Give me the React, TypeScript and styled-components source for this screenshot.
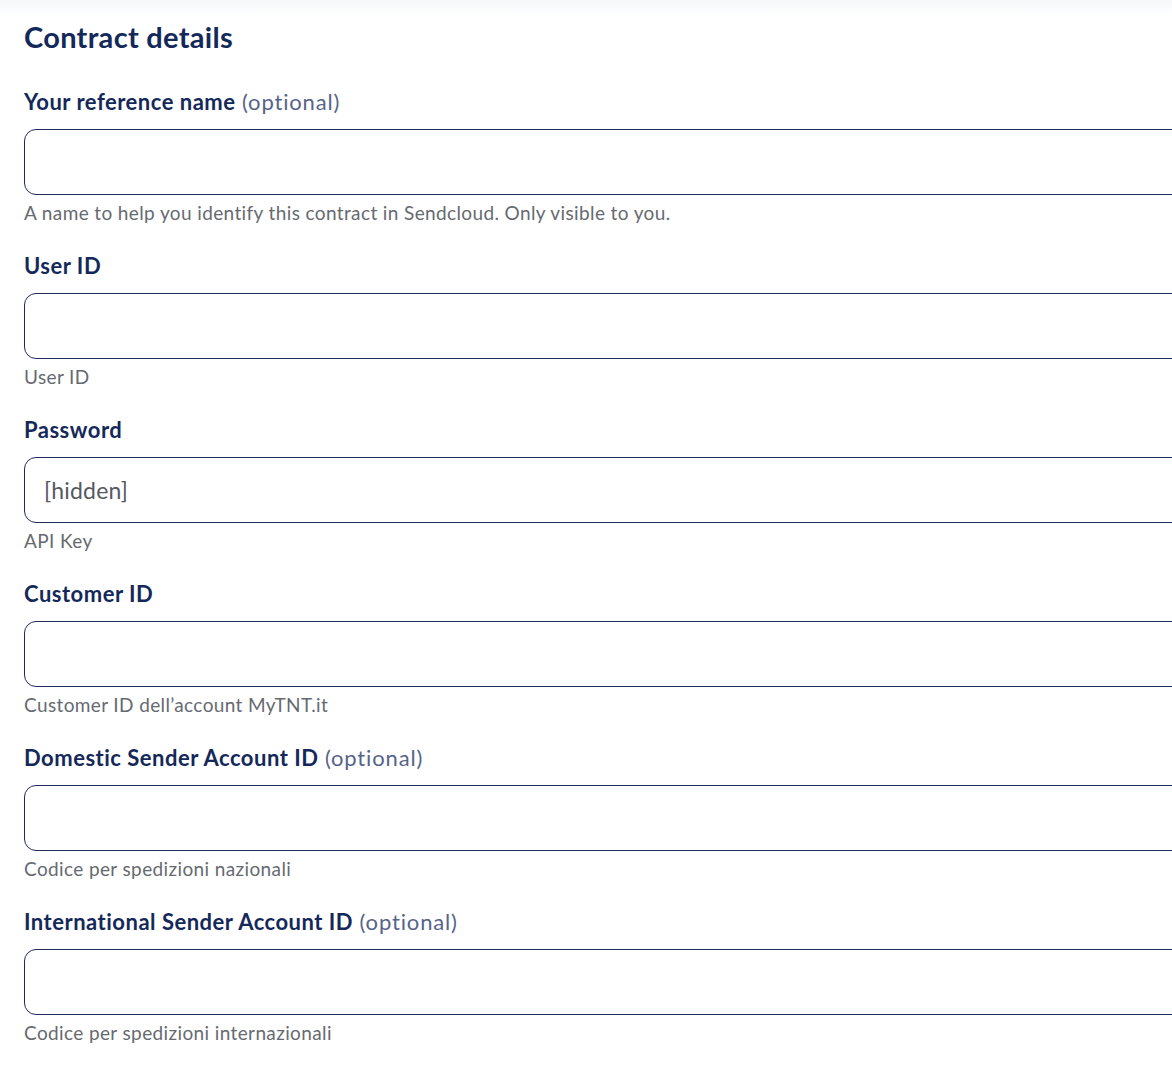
import React from "react";
import styled, {createGlobalStyle} from "styled-components";

const GlobalStyle = createGlobalStyle`
    html, body{
        margin: 0;
        padding: 0;
        background: #ffffff;
        overflow-x: hidden;
    }
    body{
        font-family: Lato, "Noto Sans", sans-serif;
    }
`

const Page = styled.div`
    position: relative;
    padding: 19px 0 40px 24px;
    &::before{
        content: "";
        position: absolute;
        top: 0;
        left: 0;
        right: 0;
        height: 16px;
        background: linear-gradient(#f6f7fa, #ffffff);
    }
`

const Heading = styled.h2`
    position: relative;
    margin: 0 0 33px 0;
    font-size: 29px;
    line-height: 36px;
    font-weight: 700;
    letter-spacing: 0.3px;
    color: #14295a;
`

const Field = styled.div`
    display: flex;
    flex-direction: column;
    margin-bottom: 27px;
`

const Label = styled.label`
    font-size: 22px;
    line-height: 28px;
    font-weight: 700;
    letter-spacing: 0.5px;
    color: #14295a;
    margin-bottom: 13px;
`

const Optional = styled.span`
    font-weight: 400;
    letter-spacing: 0.85px;
    color: #56648a;
`

const Input = styled.input`
    box-sizing: border-box;
    width: 1180px;
    height: 66px;
    padding: 0 19px;
    border: 1px solid #1b2b5a;
    border-radius: 12px;
    background: #ffffff;
    font-family: inherit;
    font-size: 23px;
    letter-spacing: 0.2px;
    color: #555a61;
    outline: none;
`

const Help = styled.div`
    margin-top: 6px;
    font-size: 19px;
    line-height: 24px;
    letter-spacing: 0.38px;
    color: #666a70;
`

type FieldProps = {
    label: string;
    optional?: boolean;
    help: string;
    value?: string;
}

const FormField = ({label, optional, help, value}: FieldProps)=>{
    return (
        <Field>
            <Label>
                {label}
                {optional && <Optional> (optional)</Optional>}
            </Label>
            <Input defaultValue={value}/>
            <Help>{help}</Help>
        </Field>
    )
}

const fields: FieldProps[] = [
    {label: "Your reference name", optional: true, help: "A name to help you identify this contract in Sendcloud. Only visible to you."},
    {label: "User ID", help: "User ID"},
    {label: "Password", help: "API Key", value: "[hidden]"},
    {label: "Customer ID", help: "Customer ID dell\u2019account MyTNT.it"},
    {label: "Domestic Sender Account ID", optional: true, help: "Codice per spedizioni nazionali"},
    {label: "International Sender Account ID", optional: true, help: "Codice per spedizioni internazionali"},
]

const App = ()=>{
    return (
        <>
            <GlobalStyle/>
            <Page>
                <Heading>Contract details</Heading>
                {fields.map((f)=>(
                    <FormField key={f.label} {...f}/>
                ))}
            </Page>
        </>
    )
}

export default App
